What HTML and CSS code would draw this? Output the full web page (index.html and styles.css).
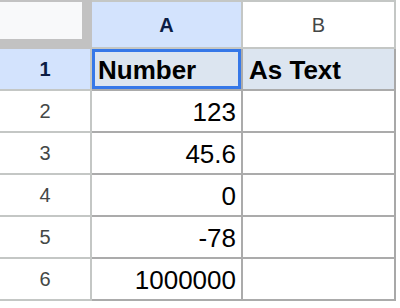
FILE: index.html
```html
<!DOCTYPE html>
<html>
<head>
<meta charset="utf-8">
<link rel="stylesheet" href="styles.css">
</head>
<body>
<div class="sheet">
  <div class="corner"><div class="corner-inner"></div></div>
  <div class="colhead active">A</div>
  <div class="colhead last">B</div>

  <div class="rowhead active">1</div>
  <div class="cell head selected">Number</div>
  <div class="cell head last">As Text</div>

  <div class="rowhead">2</div>
  <div class="cell num">123</div>
  <div class="cell last"></div>

  <div class="rowhead">3</div>
  <div class="cell num">45.6</div>
  <div class="cell last"></div>

  <div class="rowhead">4</div>
  <div class="cell num">0</div>
  <div class="cell last"></div>

  <div class="rowhead">5</div>
  <div class="cell num">-78</div>
  <div class="cell last"></div>

  <div class="rowhead">6</div>
  <div class="cell num">1000000</div>
  <div class="cell last"></div>
</div>
</body>
</html>
```

FILE: styles.css
```css
* { box-sizing: border-box; }
html, body { margin: 0; padding: 0; background: #ffffff; }
body { width: 400px; height: 308px; overflow: hidden; font-family: "Liberation Sans", Arial, sans-serif; }

.sheet {
  display: grid;
  grid-template-columns: 92px 151px 153px;
  grid-template-rows: 49px repeat(6, 42px);
}

.corner {
  background: #c2c2c2;
  padding-top: 2px;
}
.corner-inner {
  width: 82px;
  height: 37px;
  background: #f8f9fa;
}

.colhead {
  border-top: 2px solid #c4c7c5;
  border-bottom: 2px solid #c4c7c5;
  border-right: 2px solid #c4c7c5;
  background: #ffffff;
  display: flex;
  align-items: center;
  justify-content: center;
  font-size: 20px;
  color: #444746;
  padding-top: 1px;
}
.colhead.active {
  background: #d3e3fd;
  color: #0b1d44;
  font-weight: bold;
}

.rowhead {
  border-right: 2px solid #c4c7c5;
  border-bottom: 2px solid #c4c7c5;
  display: flex;
  align-items: center;
  justify-content: center;
  font-size: 20px;
  color: #444746;
}
.rowhead.active {
  background: #d3e3fd;
  color: #0b1d44;
  font-weight: bold;
}

.cell {
  border-right: 2px solid #ababab;
  border-bottom: 2px solid #ababab;
  display: flex;
  align-items: center;
  padding: 0 5px 0 6px;
  font-size: 26px;
  color: #000000;
  padding-top: 2px;
}
.cell.last { border-right-color: #a8a8a8; }
.cell.head {
  background: #dce5f0;
  font-weight: bold;
}
.cell.num { justify-content: flex-end; }
.cell.selected {
  box-shadow: inset 0 0 0 3px #3678e8;
}
```
